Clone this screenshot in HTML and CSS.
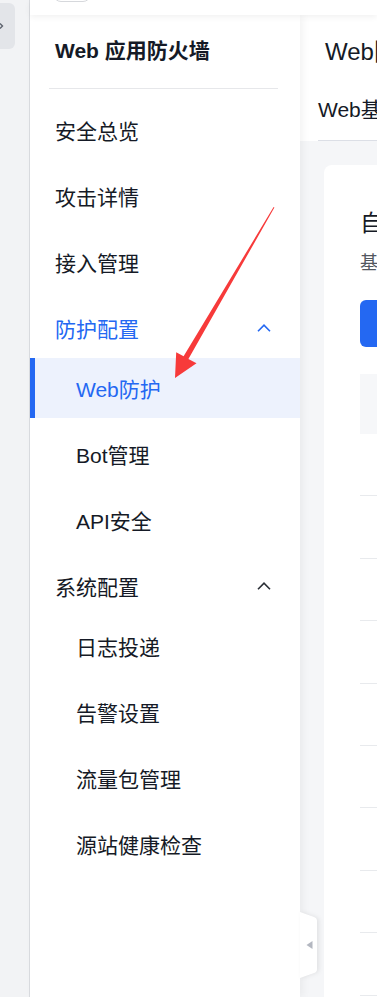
FILE: index.html
```html
<!DOCTYPE html>
<html lang="zh-CN">
<head>
    <meta charset="UTF-8">
    <meta name="viewport" content="width=device-width, initial-scale=1.0">
    <title>Web 应用防火墙 - Web防护</title>
    <link rel="stylesheet" href="styles.css">
</head>
<body>
    <div class="app">
        <aside class="rail">
            <div class="rail-btn">
                <svg width="30" height="46" viewBox="0 0 30 46"><path d="M15 20.5 L17.5 23 L15 25.5" fill="none" stroke="#5d636e" stroke-width="1.4"/></svg>
            </div>
        </aside>

        <div class="main">
            <header class="topbar">
                <div class="topbar-pill"></div>
            </header>

            <div class="layout">
                <nav class="sidebar">
                    <div class="sidebar-title">Web 应用防火墙</div>
                    <ul class="menu">
                        <li class="menu-item">安全总览</li>
                        <li class="menu-item">攻击详情</li>
                        <li class="menu-item">接入管理</li>
                        <li class="menu-group">
                            <div class="menu-item menu-item--open">
                                <span>防护配置</span>
                                <svg class="chevron" width="14" height="8" viewBox="0 0 14 8"><path d="M1 7.2 L7 1.2 L13 7.2" fill="none" stroke="currentColor" stroke-width="1.6"/></svg>
                            </div>
                            <ul class="submenu">
                                <li class="menu-item sub active">Web防护</li>
                                <li class="menu-item sub">Bot管理</li>
                                <li class="menu-item sub">API安全</li>
                            </ul>
                        </li>
                        <li class="menu-group">
                            <div class="menu-item">
                                <span>系统配置</span>
                                <svg class="chevron" width="14" height="8" viewBox="0 0 14 8"><path d="M1 7.2 L7 1.2 L13 7.2" fill="none" stroke="currentColor" stroke-width="1.6"/></svg>
                            </div>
                            <ul class="submenu">
                                <li class="menu-item sub">日志投递</li>
                                <li class="menu-item sub">告警设置</li>
                                <li class="menu-item sub">流量包管理</li>
                                <li class="menu-item sub">源站健康检查</li>
                            </ul>
                        </li>
                    </ul>

                    <div class="collapse-tab">
                        <svg width="18" height="66" viewBox="0 0 18 66">
                            <path d="M0 0 L14 5 Q17 6 17 9 L17 57 Q17 60 14 61 L0 66 Z" fill="#fff"/>
                            <path d="M12.5 29 L6.5 33 L12.5 37 Z" fill="#b3b7c0"/>
                        </svg>
                    </div>
                </nav>

                <section class="content">
                    <div class="page-head">
                        <h1 class="page-title">Web防护</h1>
                        <div class="tabs">
                            <span class="tab">Web基础防护</span>
                        </div>
                    </div>

                    <div class="page-body">
                        <div class="card">
                            <h2 class="card-title">自定义规则</h2>
                            <p class="card-desc">基于请求特征自定义访问控制规则</p>
                            <button class="btn-primary">新建规则</button>
                            <div class="table">
                                <div class="thead"></div>
                                <div class="row"></div>
                                <div class="row"></div>
                                <div class="row"></div>
                                <div class="row"></div>
                                <div class="row"></div>
                                <div class="row"></div>
                                <div class="row"></div>
                                <div class="row"></div>
                                <div class="row"></div>
                            </div>
                        </div>
                    </div>
                </section>
            </div>
        </div>
    </div>

    <!-- annotation arrow drawn over the screenshot -->
    <svg class="annotation" width="377" height="997" viewBox="0 0 377 997">
        <polygon points="273.6,207 274.4,207.6 188.4,358.9 196.5,363.2 175,378 176.2,352.2 183.6,356.3" fill="#f73a3a"/>
    </svg>
</body>
</html>
```

FILE: styles.css
```css
* {
    box-sizing: border-box;
}

body {
    margin: 0;
    height: 100vh;
    overflow: hidden;
    font-family: "Liberation Sans", "Noto Sans CJK SC", sans-serif;
    color: #151a26;
    background: #f5f6f8;
    position: relative;
}

.app {
    display: flex;
    height: 100%;
}

/* left rail */
.rail {
    width: 30px;
    flex-shrink: 0;
    background: #f2f3f5;
    border-right: 1px solid #dadce0;
}

.rail-btn {
    width: 30px;
    height: 46px;
    margin: 3px 0 0 -15px;
    border-radius: 6px;
    background: #e3e5e9;
}

.rail-btn svg {
    display: block;
}

.main {
    flex: 1;
    min-width: 0;
    display: flex;
    flex-direction: column;
}

.topbar {
    height: 15px;
    flex-shrink: 0;
    background: #fff;
    position: relative;
    z-index: 3;
    box-shadow: 0 2px 6px rgba(0, 0, 0, 0.06);
    padding-left: 23px;
}

.topbar-pill {
    width: 38px;
    height: 30px;
    margin-top: -28px;
    border: 1px solid #d6d8dc;
    border-radius: 8px;
}

.layout {
    flex: 1;
    min-height: 0;
    display: flex;
}

/* sidebar */
.sidebar {
    width: 270px;
    flex-shrink: 0;
    background: #fff;
    position: relative;
    z-index: 2;
    box-shadow: 3px 0 8px rgba(0, 0, 0, 0.05);
}

.sidebar-title {
    margin: 0 22px 0 19px;
    padding: 22px 0 23px 6px;
    font-size: 21px;
    line-height: 28px;
    font-weight: bold;
    border-bottom: 1px solid #e6e7ea;
}

.menu,
.submenu {
    list-style: none;
    margin: 0;
    padding: 0;
    display: flex;
    flex-direction: column;
    gap: 6px;
}

.menu {
    margin-top: 11px;
}

.menu-item {
    height: 60px;
    padding: 0 29px 0 25px;
    display: flex;
    align-items: center;
    justify-content: space-between;
    font-size: 21px;
    white-space: nowrap;
}

.menu-item.sub {
    padding-left: 46px;
}

.menu-item--open {
    color: #2468f2;
}

.chevron {
    display: block;
    color: #2b2f36;
}

.menu-item--open .chevron {
    color: #2468f2;
}

.menu-item.active {
    background: #edf2fd;
    color: #2468f2;
    border-left: 5px solid #2468f2;
    padding-left: 41px;
}

.collapse-tab {
    position: absolute;
    left: 100%;
    top: 897px;
    width: 18px;
    height: 66px;
    filter: drop-shadow(2px 0 2px rgba(0, 0, 0, 0.08));
}

.collapse-tab svg {
    display: block;
}

/* content */
.content {
    flex: 1;
    min-width: 0;
    overflow: hidden;
    background: #f5f6f8;
    display: flex;
    flex-direction: column;
}

.page-head {
    background: #fff;
    padding-left: 18px;
}

.page-title {
    margin: 0 0 0 7px;
    padding-top: 21px;
    font-size: 24px;
    line-height: 32px;
    font-weight: normal;
    white-space: nowrap;
}

.tabs {
    margin-top: 11px;
    height: 62px;
    border-bottom: 1px solid #dcdfe6;
    white-space: nowrap;
}

.tab {
    display: inline-block;
    font-size: 21px;
    line-height: 61px;
}

.page-body {
    flex: 1;
    display: flex;
    padding: 24px 0 0 24px;
}

.card {
    width: 900px;
    flex-shrink: 0;
    background: #fff;
    border-radius: 8px 8px 0 0;
    padding: 42px 0 0 36px;
}

.card-title {
    margin: 0;
    font-size: 23px;
    line-height: 32px;
    font-weight: normal;
    white-space: nowrap;
}

.card-desc {
    margin: 11px 0 0;
    font-size: 18px;
    line-height: 26px;
    color: #53575f;
    white-space: nowrap;
}

.btn-primary {
    display: block;
    margin-top: 24px;
    width: 150px;
    height: 47px;
    border: none;
    border-radius: 6px;
    background: #2468f2;
    color: #fff;
    font-family: inherit;
    font-size: 18px;
    text-align: left;
    padding-left: 30px;
}

.table {
    margin-top: 27px;
}

.thead {
    height: 60px;
    background: #f6f7f9;
}

.row {
    height: 62.4px;
    border-bottom: 1px solid #e8eaed;
}

.annotation {
    position: absolute;
    top: 0;
    left: 0;
    z-index: 10;
    pointer-events: none;
}
```
